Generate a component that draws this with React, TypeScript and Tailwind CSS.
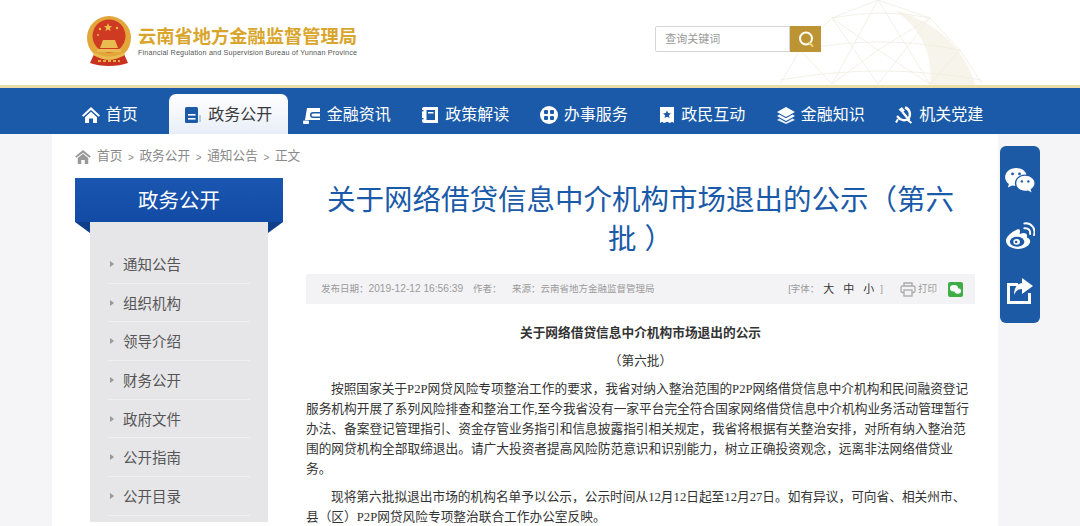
import React from 'react';

const sans = 'font-["Liberation_Sans","Noto_Sans_CJK_SC",sans-serif]';

function Emblem() {
  return (
    <svg width="46" height="50" viewBox="0 0 46 50">
      <path d="M8 38 L4 47 Q12 50 23 50 Q34 50 42 47 L38 38 Z" fill="#c8321f" />
      <circle cx="23" cy="22" r="22" fill="#e2a63a" />
      <circle cx="23" cy="20" r="16.5" fill="#cf3a22" />
      <path d="M22 7l1.2 3 3 .2-2.4 1.9.9 3-2.7-1.7-2.6 1.7.9-3-2.4-1.9 3-.2z" fill="#eec04a" />
      <circle cx="14" cy="13" r="1.2" fill="#eec04a" />
      <circle cx="31" cy="12" r="1.2" fill="#eec04a" />
      <circle cx="12" cy="19" r="1" fill="#eec04a" />
      <path d="M14 32 L17 24 H29 L32 32 Z" fill="#e9bb50" />
      <path d="M11 33 H35 V36 H11 Z" fill="#e9bb50" />
      <path d="M8 38 Q23 46 38 38" stroke="#e9bb50" strokeWidth="3" fill="none" />
      <path d="M12 45h22" stroke="#e6b143" strokeWidth="2" strokeDasharray="3 2" />
    </svg>
  );
}

function Globe() {
  const lines = [
    'M10 80 Q110 62 212 80',
    'M30 50 Q110 34 190 50',
    'M62 18 Q112 8 160 18',
    'M62 18 L108 84', 'M108 0 L62 84', 'M108 0 L160 84', 'M30 50 L62 84', 'M30 50 L62 18',
    'M160 18 L108 84', 'M160 18 L190 50', 'M190 50 L160 84', 'M62 18 L108 0', 'M108 0 L160 18',
    'M30 50 L10 84', 'M190 50 L212 84', 'M108 50 L62 84', 'M108 50 L160 84', 'M108 50 L62 18', 'M108 50 L160 18',
  ];
  return (
    <svg className="absolute left-[770px] top-0 opacity-70" width="220" height="85" viewBox="0 0 220 85" fill="none">
      <path d="M125 10 Q190 30 205 85 H160 Q165 40 125 10Z" fill="#f3eddc" opacity="0.8" />
      {lines.map((d, i) => (
        <path key={i} d={d} stroke="#e8e2d0" strokeWidth="0.7" />
      ))}
    </svg>
  );
}

const navIcons: Record<string, React.ReactNode> = {
  home: (
    <svg width="18" height="18" viewBox="0 0 18 18" fill="#fff">
      <path d="M9 1 L18 9.4 L16.6 10.8 L9 4 L1.4 10.8 L0 9.4Z" />
      <path d="M3 11.2 L9 5.8 L15 11.2 V17 H11 V12.5 H7 V17 H3Z" />
    </svg>
  ),
  book: (
    <svg width="18" height="18" viewBox="0 0 18 18">
      <rect x="1" y="1" width="13" height="16" rx="1.5" fill="#1c5ba8" />
      <rect x="4" y="8" width="7.5" height="1.6" fill="#fff" />
      <rect x="4" y="12" width="7.5" height="1.6" fill="#fff" />
      <rect x="15.5" y="9" width="1" height="7" fill="#7f9fc9" />
    </svg>
  ),
  wallet: (
    <svg width="18" height="18" viewBox="0 0 18 18" fill="#fff">
      <path d="M4 2 H17 V6 H10 A3 3 0 0 0 10 12 H17 V14 H5 L2 14 Q3 8 4 2Z" />
      <path d="M10 7.5 H17 V10.5 H10 A1.5 1.5 0 0 1 10 7.5Z" />
      <rect x="0" y="14.5" width="6" height="3.5" rx="1" />
    </svg>
  ),
  reader: (
    <svg width="18" height="18" viewBox="0 0 18 18" fill="#fff">
      <path d="M3 1 H17 V17 H3 Q1 17 1 15 V3 Q1 1 3 1Z" />
      <rect x="5.5" y="4" width="8.5" height="10" fill="#1c5ba8" />
      <rect x="7" y="6" width="5.5" height="1.5" fill="#fff" />
      <rect x="0" y="4" width="2.5" height="1.4" fill="#1c5ba8" />
      <rect x="0" y="12" width="2.5" height="1.4" fill="#1c5ba8" />
    </svg>
  ),
  service: (
    <svg width="18" height="18" viewBox="0 0 18 18">
      <circle cx="9" cy="9" r="9" fill="#fff" />
      <rect x="4" y="4" width="4" height="4" rx="1" fill="#1c5ba8" />
      <rect x="10" y="4" width="4" height="4" rx="1" fill="#1c5ba8" />
      <rect x="4" y="10" width="4" height="4" rx="1" fill="#1c5ba8" />
      <rect x="10" y="10" width="4" height="4" rx="1" fill="#1c5ba8" />
    </svg>
  ),
  star: (
    <svg width="16" height="18" viewBox="0 0 16 18">
      <path d="M1 1 H15 V17 L13 15.8 L11 17 L8 15.8 L5 17 L3 15.8 L1 17Z" fill="#fff" />
      <path d="M8 4.5l1.2 2.6 2.8.3-2.1 1.9.6 2.8L8 10.7l-2.5 1.4.6-2.8L4 7.4l2.8-.3z" fill="#1c5ba8" />
    </svg>
  ),
  layers: (
    <svg width="18" height="18" viewBox="0 0 18 18" fill="#fff">
      <path d="M9 1 L18 6 L9 11 L0 6Z" />
      <path d="M2.4 8.6 L9 12.3 L15.6 8.6 L18 10 L9 15 L0 10Z" />
      <path d="M2.4 12.6 L9 16.3 L15.6 12.6 L18 14 L9 18 L0 14Z" opacity="0.9" />
    </svg>
  ),
  party: (
    <svg width="18" height="18" viewBox="0 0 18 18" fill="none" stroke="#fff">
      <path d="M10 1.5 A7 7 0 0 1 13 13 A7 7 0 0 1 3.5 11.5 L2 10" strokeWidth="2.4" />
      <path d="M4 3.5 L7 1.5 L9.5 4.5 L7 6.5Z" fill="#fff" strokeWidth="0.6" />
      <path d="M7.5 6 L14.5 14.5" strokeWidth="2.2" />
      <path d="M3 13 L1 16.5 M12 13.5 L16.5 17" strokeWidth="2" />
    </svg>
  ),
};

const navItems = [
  { label: '首页', icon: 'home' },
  { label: '政务公开', icon: 'book', active: true },
  { label: '金融资讯', icon: 'wallet' },
  { label: '政策解读', icon: 'reader' },
  { label: '办事服务', icon: 'service' },
  { label: '政民互动', icon: 'star' },
  { label: '金融知识', icon: 'layers' },
  { label: '机关党建', icon: 'party' },
];

const sideItems = ['通知公告', '组织机构', '领导介绍', '财务公开', '政府文件', '公开指南', '公开目录'];
const crumbs = ['首页', '政务公开', '通知公告', '正文'];

export default function App() {
  return (
    <div className={`relative h-[526px] w-[1080px] overflow-hidden bg-white ${sans}`}>
      {/* header */}
      <header className="relative h-[85px] bg-white">
        <Globe />
        <div className="relative flex items-start pl-[86px] pt-[16px]">
          <Emblem />
          <div className="ml-[6px] pt-[10px]">
            <div className="text-[18.25px] font-bold leading-[22px] text-[#d9a52c]">云南省地方金融监督管理局</div>
            <div className="whitespace-nowrap text-[7.2px] leading-[9px] tracking-[0.18px] text-[#555]">
              Financial Regulation and Supervision Bureau of Yunnan Province
            </div>
          </div>
          <div className="ml-[298px] mt-[10px] flex h-[26px] w-[166px]">
            <div className="flex flex-1 items-center rounded-l-[2px] border border-[#d5d5d5] bg-white pl-[9px] pt-[1px] text-[11px] text-[#999]">
              查询关键词
            </div>
            <div className="flex w-[31px] items-center justify-center bg-[#bc9433]">
              <svg width="18" height="18" viewBox="0 0 18 18" fill="none" stroke="#fff" strokeWidth="2">
                <circle cx="9" cy="8.5" r="6" />
                <path d="M12.5 13 L15.5 16" stroke="#f6d66c" strokeLinecap="round" />
              </svg>
            </div>
          </div>
        </div>
      </header>
      <div className="h-[3px] bg-[#eadca6]" />

      {/* nav */}
      <nav className="flex h-[46px] items-end bg-[#1a5aa8] pl-[50.5px]">
        {navItems.map((item) => (
          <div
            key={item.label}
            className={
              item.active
                ? 'flex h-[40px] w-[118.5px] items-center justify-center gap-[6px] rounded-t-[7px] bg-gradient-to-b from-white to-[#e8eef8] pt-[2px] text-[16px] text-[#3a3a3a]'
                : 'flex h-[40px] w-[118.5px] items-center justify-center gap-[6px] pt-[2px] text-[16px] text-white'
            }
          >
            {navIcons[item.icon]}
            <span>{item.label}</span>
          </div>
        ))}
      </nav>

      <div className="flex h-[392px] bg-[#f5f5f7]">
        <div className="ml-[52px] w-[946px] bg-white">
          {/* breadcrumb */}
          <div className="flex h-[44px] items-center pl-[23px] pt-[2px] text-[12.7px] text-[#8a8a8a]">
            <svg className="mr-[6px]" width="16" height="14" viewBox="0 0 18 16" fill="#999">
              <path d="M9 0 L18 7.4 L16.6 8.8 L9 3 L1.4 8.8 L0 7.4Z" />
              <path d="M3 9.2 L9 4.4 L15 9.2 V16 H11 V11.5 H7 V16 H3Z" />
            </svg>
            {crumbs.map((c, i) => (
              <React.Fragment key={c}>
                {i > 0 && <span className="w-[17px] text-center text-[10px]">&gt;</span>}
                <span>{c}</span>
              </React.Fragment>
            ))}
          </div>

          <div className="flex pl-[23px]">
            {/* sidebar */}
            <aside className="relative w-[208px]">
              <div className="flex h-[44px] items-center justify-center bg-gradient-to-b from-[#1a56b0] to-[#124ba6] pt-[2px] text-[20.5px] text-white">政务公开</div>
              <div className="absolute left-0 top-[44px] h-0 w-0 border-t-[11px] border-l-[15px] border-t-[#0f3f8a] border-l-transparent" />
              <div className="absolute right-0 top-[44px] h-0 w-0 border-t-[11px] border-r-[15px] border-t-[#0f3f8a] border-r-transparent" />
              <ul className="mx-[15px] h-[300px] bg-[#e6e6e8] px-[18px] pt-[23px]">
                {sideItems.map((s) => (
                  <li key={s} className="flex h-[38.7px] items-center border-b border-[#f0f0f2] text-[14.5px] text-[#555]">
                    <span className="ml-[2px] mr-[9px] h-0 w-0 border-y-[3.5px] border-l-[4px] border-y-transparent border-l-[#999]" />
                    <span className="pt-[4px]">{s}</span>
                  </li>
                ))}
              </ul>
            </aside>

            {/* article */}
            <main className="ml-[23px] w-[669px] pt-[3px] font-['Liberation_Serif','Noto_Sans_CJK_SC',serif] text-[12.7px] text-[#333]">
              <h1 className={`text-center text-[28.5px] font-normal leading-[39px] text-[#1a5aa8] ${sans}`}>
                关于网络借贷信息中介机构市场退出的公示（第六
                <br />
                批&nbsp;）
              </h1>
              <div className={`mt-[15px] flex h-[30px] items-center justify-between bg-[#f3f3f5] pl-[15px] pr-[12px] text-[9.5px] text-[#9a9a9a] ${sans}`}>
                <div className="flex items-center">
                  <span className="w-[152px]">
                    发布日期：<span className="text-[10.2px]">2019-12-12 16:56:39</span>
                  </span>
                  <span className="w-[39px]">作者：</span>
                  <span>来源：云南省地方金融监督管理局</span>
                </div>
                <div className="flex items-center">
                  <span>[字体：</span>
                  <span className="ml-[4px] flex gap-[9px] text-[11px] text-[#333]">
                    <span>大</span>
                    <span>中</span>
                    <span>小</span>
                  </span>
                  <span className="ml-[6px]">]</span>
                  <svg className="ml-[17px]" width="16" height="15" viewBox="0 0 16 15" fill="none" stroke="#aaa" strokeWidth="1.3">
                    <path d="M4 4 V1 H12 V4" />
                    <rect x="1" y="4" width="14" height="6.5" rx="1.5" />
                    <rect x="4" y="8" width="8" height="6" fill="#f3f3f5" />
                  </svg>
                  <span className="ml-[2px] w-[30px]">打印</span>
                  <svg width="15" height="15" viewBox="0 0 15 15">
                    <rect width="15" height="15" rx="2" fill="#3fae49" />
                    <ellipse cx="6" cy="6.2" rx="4" ry="3.3" fill="#fff" />
                    <ellipse cx="9.8" cy="9" rx="3.3" ry="2.7" fill="#fff" />
                  </svg>
                </div>
              </div>

              <p className="mt-[19px] text-center font-bold leading-[20px]">关于网络借贷信息中介机构市场退出的公示</p>
              <p className="mt-[8px] text-center leading-[20px]">（第六批）</p>
              <p className="mt-[8px] text-left leading-[20px] [text-indent:25px]">
                按照国家关于P2P网贷风险专项整治工作的要求，我省对纳入整治范围的P2P网络借贷信息中介机构和民间融资登记服务机构开展了系列风险排查和整治工作,至今我省没有一家平台完全符合国家网络借贷信息中介机构业务活动管理暂行办法、备案登记管理指引、资金存管业务指引和信息披露指引相关规定，我省将根据有关整治安排，对所有纳入整治范围的网贷机构全部取缔退出。请广大投资者提高风险防范意识和识别能力，树立正确投资观念，远离非法网络借贷业务。
              </p>
              <p className="mt-[8px] leading-[20px] [text-indent:25px]">
                现将第六批拟退出市场的机构名单予以公示，公示时间从12月12日起至12月27日。如有异议，可向省、相关州市、县（区）P2P网贷风险专项整治联合工作办公室反映。
              </p>
            </main>
          </div>
        </div>
      </div>

      {/* share rail */}
      <div className="absolute left-[1000px] top-[146px] flex h-[177px] w-[40px] flex-col items-center gap-[28.5px] rounded-[6px] bg-[#1d5aa6] pt-[21px]">
        <svg width="30" height="26" viewBox="0 0 32 28" fill="#fff">
          <path d="M12 1 C5 1 0 5.5 0 11 C0 14 1.6 16.6 4 18.4 L3 22 L7.4 19.8 C8.6 20.1 9.8 20.3 11 20.3 C10.7 19.3 10.5 18.5 10.5 17.5 C10.5 12 15.6 8 22 8 L23 8 C21.8 4 17.4 1 12 1Z" />
          <path d="M21.5 9.5 C16 9.5 12 13.2 12 17.6 C12 22 16 25.6 21.5 25.6 C22.6 25.6 23.6 25.4 24.6 25.2 L28.4 27.2 L27.4 24 C30 22.4 31.6 20.2 31.6 17.6 C31.6 13.2 27 9.5 21.5 9.5Z" />
          <circle cx="8" cy="7.5" r="1.5" fill="#1d5aa6" />
          <circle cx="15.5" cy="7.5" r="1.5" fill="#1d5aa6" />
          <circle cx="18" cy="15.5" r="1.3" fill="#1d5aa6" />
          <circle cx="25" cy="15.5" r="1.3" fill="#1d5aa6" />
        </svg>
        <svg width="29" height="28" viewBox="0 0 30 28" fill="none">
          <path d="M12 7 C5 10 0 15 0 19 C0 24 6 27.5 12.5 27.5 C19.5 27.5 25 23.5 25 19.5 C25 17 23 16 21.5 15.5 C22.5 12.5 21 11 18 11 L14 12 C15 8 14.5 6.5 12 7Z" fill="#fff" />
          <ellipse cx="11.5" cy="20" rx="7.5" ry="5.2" fill="#1d5aa6" />
          <ellipse cx="11" cy="20" rx="3.5" ry="3" fill="#fff" />
          <circle cx="10.5" cy="20.2" r="1.3" fill="#1d5aa6" />
          <path d="M19 6 C23 5.5 25.5 8 25 12" stroke="#fff" strokeWidth="2" strokeLinecap="round" />
          <path d="M19 1 C26 0 31 6 29 13" stroke="#fff" strokeWidth="2" strokeLinecap="round" />
        </svg>
        <svg width="26" height="26" viewBox="0 0 26 26" fill="#fff">
          <path d="M0 5 H11 V8 H3 V23 H21 V15 H24 V26 H0Z" />
          <path d="M15 0 L26 8 L15 16 V11 C11 11 8.5 13 7 17 C7 10 10 5.5 15 5Z" />
        </svg>
      </div>
    </div>
  );
}
